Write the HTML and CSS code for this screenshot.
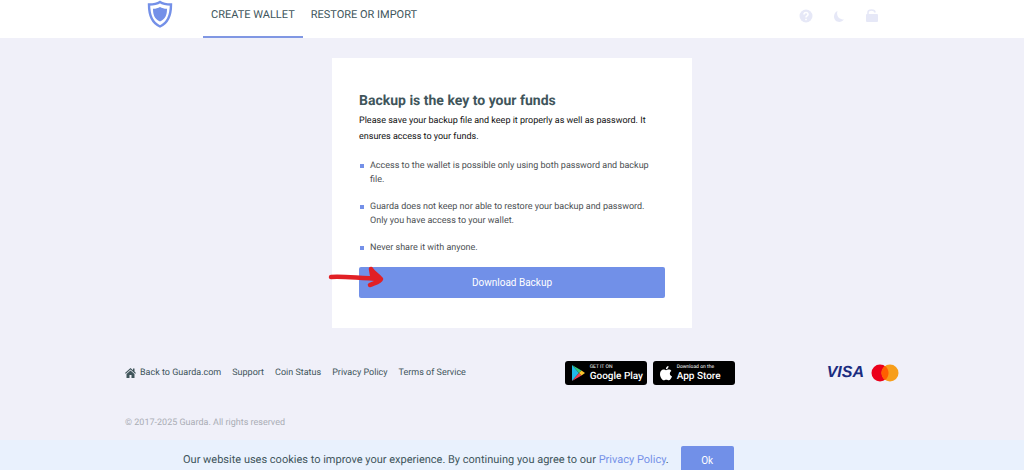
FILE: index.html
```html
<!DOCTYPE html>
<html lang="en">
<head>
  <meta charset="UTF-8">
  <meta name="viewport" content="width=device-width, initial-scale=1.0">
  <title>Guarda Wallet - Backup</title>
  <link rel="stylesheet" href="styles.css">
</head>
<body>
  <header class="header">
    <div class="header-inner">
      <a class="logo" href="#" aria-label="Guarda">
        <svg width="26" height="28" viewBox="0 0 26 28">
          <path d="M13 2C10 4 6 4.500 2 4.500c0 10 2 18 11 22 9-4 11-12 11-22-4 0-8-.5-11-2.500z" fill="#fff" stroke="#7490e8" stroke-width="2.400"/>
          <path d="M13 7c-2 1.200-4 1.800-7 1.800 0 6 1.500 10.200 7 12.700 5.500-2.500 7-6.700 7-12.700-3 0-5-.6-7-1.800z" fill="#7490e8"/>
        </svg>
      </a>
      <nav class="tabs">
        <a class="tab active" href="#">CREATE WALLET</a>
        <a class="tab" href="#">RESTORE OR IMPORT</a>
      </nav>
      <div class="tools">
        <button class="tool" type="button" aria-label="Help">
          <svg width="14" height="14" viewBox="0 0 14 14"><circle cx="7" cy="7" r="6.500" fill="#e6e8f7"/><path d="M5 5.500c0-3 4.200-2.500 4 0C9 7 7 6.800 7 8.500M7 9.700v1.500" fill="none" stroke="#fff" stroke-width="1.600"/></svg>
        </button>
        <button class="tool" type="button" aria-label="Dark mode">
          <svg width="14" height="14" viewBox="0 0 14 14"><path d="M5.500 2C4 7 7 10.500 12 10.500 9 14.500 2 13.500 2 7.500 2 5 3.500 2.800 5.500 2z" fill="#e6e8f7"/></svg>
        </button>
        <button class="tool" type="button" aria-label="Lock">
          <svg width="14" height="14" viewBox="0 0 14 14"><path d="M3 6V3.500C3 .2 10 .2 10 3.500" fill="none" stroke="#e6e8f7" stroke-width="1.600"/><rect x="1" y="5" width="12" height="8" rx="1" fill="#e6e8f7"/></svg>
        </button>
      </div>
    </div>
  </header>

  <main class="card">
    <h1 class="card-title">Backup is the key to your funds</h1>
    <p class="card-text">Please save your backup file and keep it properly as well as password. It ensures access to your funds.</p>
    <ul class="notes">
      <li>Access to the wallet is possible only using both password and backup file.</li>
      <li>Guarda does not keep nor able to restore your backup and password. Only you have access to your wallet.</li>
      <li>Never share it with anyone.</li>
    </ul>
    <div class="download">
      <button class="download-button" type="button">Download Backup</button>
      <svg class="arrow" width="58" height="26" viewBox="0 0 58 26" aria-hidden="true">
        <path d="M4 13c12-1 24 1 49 2M44 5c2 4 7 6 10 10-1 3-7 4-11 6M44 5l1 6 5 3" fill="none" stroke="#e12025" stroke-width="4.500" stroke-linecap="round" stroke-linejoin="round"/>
      </svg>
    </div>
  </main>

  <footer class="footer">
    <div class="footer-row">
      <nav class="footer-links">
        <a href="#"><svg class="home" width="11" height="10" viewBox="0 0 11 10"><path d="M0 5l5.500-5L8 2.200V.5h1.500v3L11 5l-.8.7L5.500 1.500.8 5.700z" fill="#40555b"/><path d="M1.500 6l4-3.500 4 3.500v4h-3V7h-2v3h-3z" fill="#40555b"/></svg>Back to Guarda.com</a>
        <a href="#">Support</a>
        <a href="#">Coin Status</a>
        <a href="#">Privacy Policy</a>
        <a href="#">Terms of Service</a>
      </nav>
      <div class="stores">
        <a class="store google" href="#">
          <svg width="13" height="16" viewBox="0 0 13 16"><path d="M0 0v16l7-8z" fill="#20b8e8"/><path d="M0 0l9.500 5.500L7 8z" fill="#35c77b"/><path d="M0 16l9.500-5.500L7 8z" fill="#ed4354"/><path d="M9.500 5.500L13 8l-3.500 2.500L7 8z" fill="#fbc52d"/></svg>
          <span class="store-text"><small>GET IT ON</small><b>Google Play</b></span>
        </a>
        <a class="store apple" href="#">
          <svg width="12" height="15" viewBox="0 0 12 15"><path d="M8.500 0c.2 1.800-1 3.200-2.600 3.300C5.700 1.700 7 .2 8.500 0zM6 4.200c.8 0 1.500-.7 2.800-.7 1 0 2 .5 2.600 1.400-2.300 1.500-1.900 4.400.6 5.400-.6 1.800-1.900 4-3.300 4-.9 0-1.200-.6-2.400-.6s-1.600.6-2.400.6C2 14.300 0 11 0 8c0-3 1.800-4.500 3.500-4.500 1.100 0 1.900.7 2.500.7z" fill="#fff"/></svg>
          <span class="store-text"><small>Download on the</small><b>App Store</b></span>
        </a>
      </div>
      <div class="cards">
        <span class="visa">VISA</span>
        <svg width="28" height="18" viewBox="0 0 28 18" role="img" aria-label="Mastercard"><circle cx="9" cy="9" r="8.500" fill="#eb001b"/><circle cx="19" cy="9" r="8.500" fill="#f79e1b"/><path d="M14 2.100a8.500 8.500 0 0 1 0 13.800 8.500 8.500 0 0 1 0-13.800z" fill="#ff5f00"/></svg>
      </div>
    </div>
    <p class="copyright">© 2017-2025 Guarda. All rights reserved</p>
  </footer>

  <div class="cookies">
    <div class="cookies-inner">
      <p class="cookies-text">Our website uses cookies to improve your experience. By continuing you agree to our <a href="#">Privacy Policy</a>.</p>
      <button class="cookies-button" type="button">Ok</button>
    </div>
  </div>
</body>
</html>
```

FILE: styles.css
```css
* {
  box-sizing: border-box;
}

html {
  overflow: hidden;
}

body {
  margin: 0;
  font-family: Roboto, "Liberation Sans", sans-serif;
  font-size: 9px;
  line-height: 14px;
  text-rendering: geometricPrecision;
  background: #f0f0f9;
  color: #40555b;
}

a {
  color: inherit;
  text-decoration: none;
}

button {
  font-family: inherit;
  border: none;
  cursor: pointer;
}

.header {
  background: #fff;
}

.header-inner {
  display: flex;
  max-width: 774px;
  height: 38px;
  margin: 0 auto;
  padding: 0 20px 0 22px;
}

.logo {
  margin-right: 30px;
}

.logo svg {
  display: block;
}

.tabs {
  display: flex;
}

.tab {
  padding: 6px 8px 0;
  font-size: 11px;
  line-height: 18px;
  border-bottom: 2px solid transparent;
}

.tab.active {
  border-color: #8097e3;
}

.tools {
  display: flex;
  align-items: flex-start;
  gap: 19px;
  margin-left: auto;
  padding-top: 9px;
}

.tool {
  padding: 0;
  background: none;
}

.tool svg {
  display: block;
}

.card {
  max-width: 360px;
  margin: 20px auto 0;
  padding: 32px 27px 30px;
  background: #fff;
}

.card-title {
  margin: 0 0 1px;
  font-size: 14px;
  line-height: 22px;
  font-weight: 700;
}

.card-text {
  margin: 0;
  line-height: 16px;
  color: #111;
}

.notes {
  margin: 14px 0 12px;
  padding: 0 4px 0 0;
  list-style: none;
  color: #4c5053;
}

.notes li {
  position: relative;
  padding-left: 11px;
}

.notes li + li {
  margin-top: 13px;
}

.notes li::before {
  content: "";
  position: absolute;
  left: 1px;
  top: 5px;
  width: 4px;
  height: 4px;
  background: #7490e8;
}

.download {
  position: relative;
}

.download-button {
  display: block;
  width: 100%;
  height: 31px;
  font-size: 10px;
  color: #fff;
  background: #7190e8;
  border-radius: 2px;
}

.arrow {
  position: absolute;
  left: -32px;
  top: -3px;
}

.footer {
  max-width: 774px;
  margin: 0 auto;
  padding-top: 33px;
}

.footer-row {
  display: flex;
  align-items: center;
}

.footer-links {
  display: flex;
  gap: 11px;
  flex: 1;
}

.footer-links a {
  display: flex;
  align-items: center;
}

.home {
  margin-right: 4px;
}

.stores {
  display: flex;
  gap: 6px;
}

.store {
  display: flex;
  align-items: center;
  gap: 5px;
  width: 82px;
  height: 24px;
  padding-left: 7px;
  background: #000;
  border-radius: 3px;
  color: #fff;
}

.store-text {
  display: flex;
  flex-direction: column;
}

.store small {
  font-size: 5px;
  line-height: 7px;
}

.store b {
  font-size: 10px;
  line-height: 11px;
  font-weight: 500;
  white-space: nowrap;
}

.cards {
  display: flex;
  align-items: center;
  gap: 7px;
  margin-left: 92px;
}

.visa {
  font-family: "Liberation Sans", sans-serif;
  font-size: 16px;
  font-style: italic;
  font-weight: 700;
  color: #1b2c80;
}

.copyright {
  margin: 31px 0 10px;
  color: #aaadb5;
}

.cookies {
  background: #e9f1fd;
}

.cookies-inner {
  display: flex;
  gap: 12px;
  max-width: 774px;
  margin: 0 auto;
  padding: 6px 0 7px 58px;
}

.cookies-text {
  margin: 0;
  font-size: 11px;
  line-height: 28px;
}

.cookies-text a {
  color: #7490e8;
}

.cookies-button {
  width: 53px;
  height: 28px;
  font-size: 10px;
  color: #fff;
  background: #7190e8;
  border-radius: 2px;
}
```
